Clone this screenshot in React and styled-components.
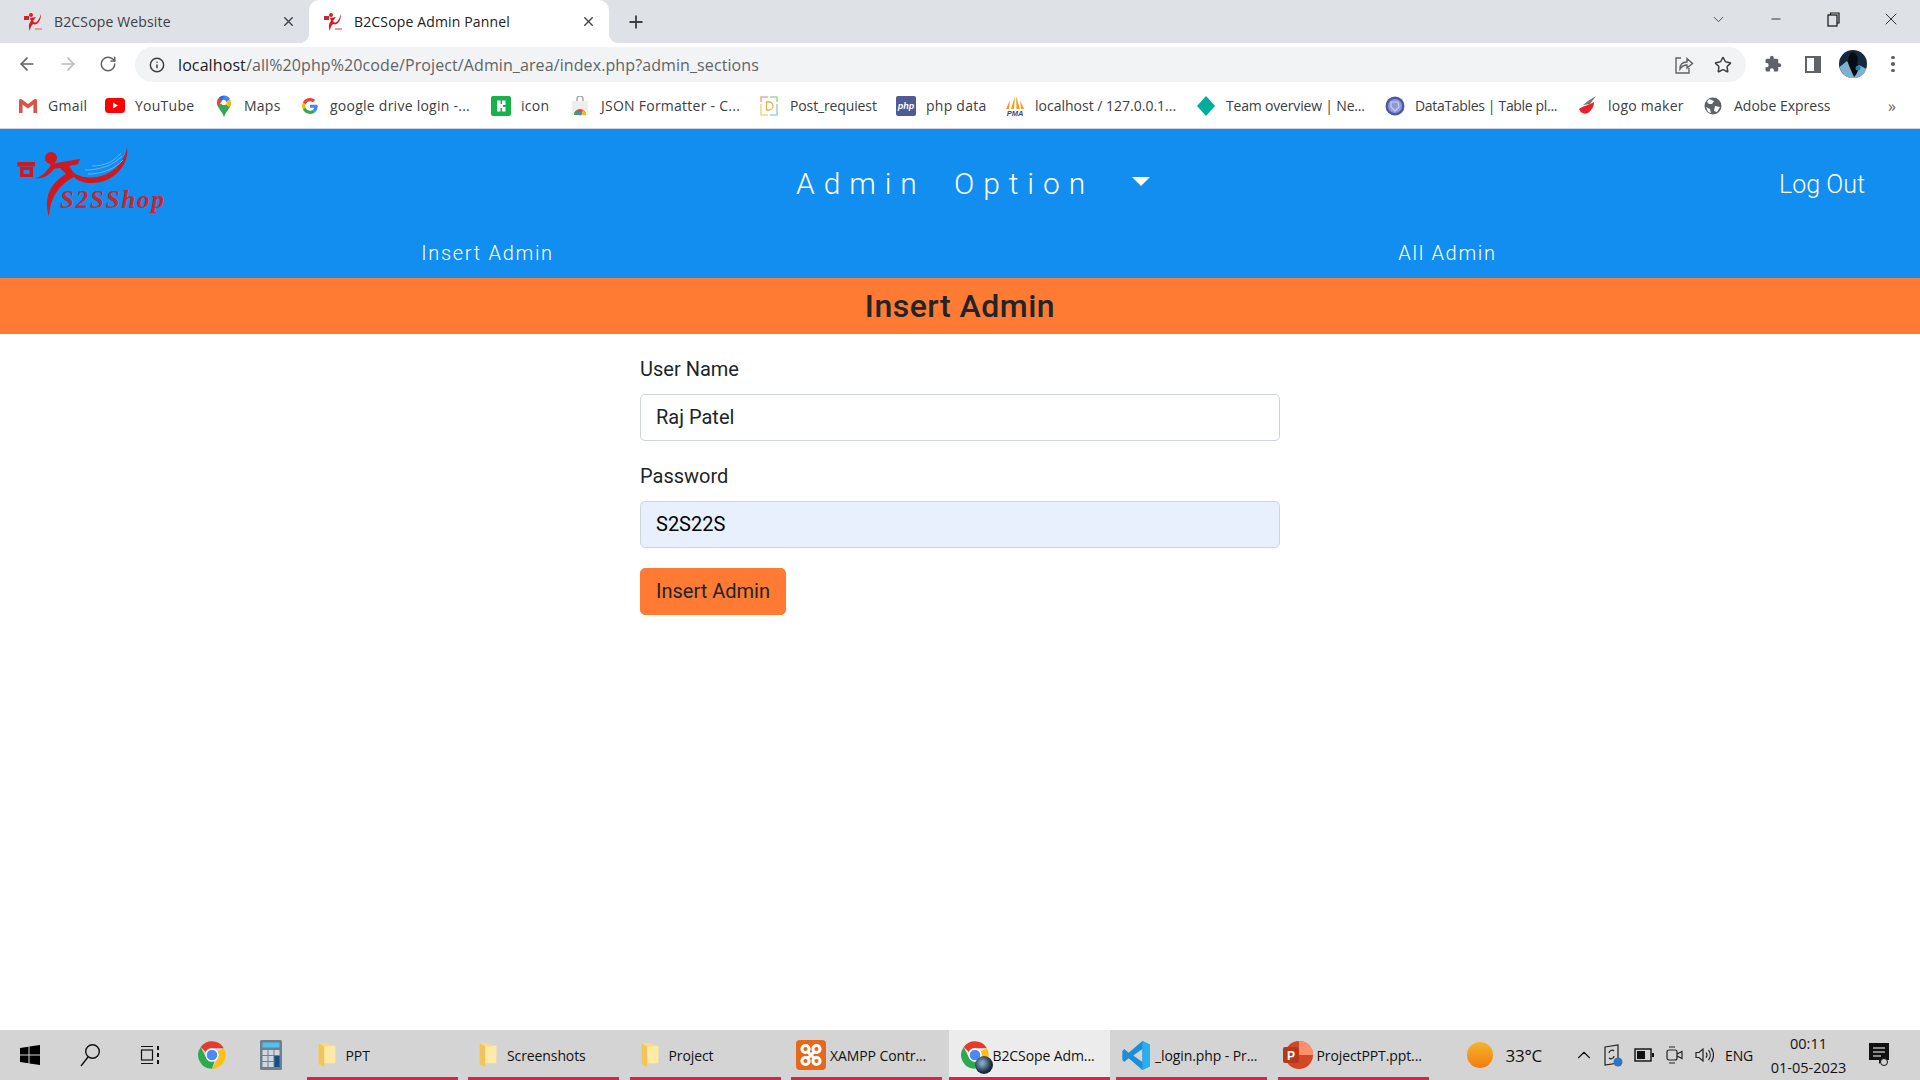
import React from 'react';
import styled, { createGlobalStyle } from 'styled-components';
import { ArrowLeft, ArrowRight, RotateCw, Star, Info, Plus, X, Minus, ChevronDown, ChevronUp } from 'lucide-react';

const GlobalStyle = createGlobalStyle`
  html, body { margin: 0; padding: 0; height: 100%; background: #fff; }
  #root { height: 100%; }
  * { box-sizing: border-box; }
`;

function Favicon() {
  return (
    <svg width="22" height="20" viewBox="0 0 22 20">
      <rect x="1" y="4" width="5" height="4" fill="#c9252c" />
      <circle cx="8" cy="3" r="2" fill="#d11f28" />
      <path d="M7 6 L13 5 L10 9 C12 12 15 11 18 2 C18 9 14 14 10 12 C8 14 7 16 7 19 C5 15 6 11 8 9 Z" fill="#d11f28" />
      <path d="M12 17 h7" stroke="#e79a9d" strokeWidth="2" />
    </svg>
  );
}

function GmailIcon() {
  return (
    <svg width="20" height="16" viewBox="0 0 20 16">
      <path d="M1 15 V3 L10 9.5 L19 3 V15 H15 V7.5 L10 11 L5 7.5 V15 Z" fill="#f1f1f1" />
      <path d="M1 15 V2.5 C1 1 2.6 0.4 4 1.4 L10 6 L16 1.4 C17.4 0.4 19 1 19 2.5 V15 H15.5 V6.5 L10 10.5 L4.5 6.5 V15 Z" fill="#d9534a" />
    </svg>
  );
}

function YoutubeIcon() {
  return (
    <svg width="20" height="15" viewBox="0 0 20 15">
      <rect width="20" height="15" rx="3.5" fill="#f00" />
      <path d="M8 4.5 L13 7.5 L8 10.5 Z" fill="#fff" />
    </svg>
  );
}

function MapsIcon() {
  return (
    <svg width="16" height="22" viewBox="0 0 16 22">
      <path d="M8 22 C6 16 1 13 1 7.5 L8 10 Z" fill="#34a853" />
      <path d="M8 22 C10 16 15 13 15 7.5 L8 10 Z" fill="#34a853" />
      <path d="M3 2.5 A7 7 0 0 1 8 .5 L8 4 L3 8 Z" fill="#1a73e8" />
      <path d="M8 .5 A7 7 0 0 1 14 4 L10 8 L7 4 Z" fill="#4285f4" />
      <path d="M1 7.5 A7 7 0 0 1 3 2.5 L6 6 L2 11 Z" fill="#ea4335" />
      <path d="M14 4 A7 7 0 0 1 15 7.5 C15 9 14 11 13 12 L9 9 Z" fill="#fbbc04" />
      <circle cx="8" cy="7.5" r="2.5" fill="#fff" />
    </svg>
  );
}

function GoogleIcon() {
  return (
    <svg width="16" height="16" viewBox="0 0 48 48">
      <path fill="#EA4335" d="M24 9.5c3.5 0 6.7 1.3 9.1 3.5l6.8-6.8C35.8 2.4 30.3 0 24 0 14.6 0 6.5 5.4 2.6 13.2l7.9 6.2C12.4 13.7 17.7 9.5 24 9.5z" />
      <path fill="#4285F4" d="M46.9 24.5c0-1.6-.1-3.1-.4-4.5H24v9h12.9c-.6 3-2.2 5.5-4.8 7.2l7.7 6c4.5-4.2 7.1-10.3 7.1-17.7z" />
      <path fill="#FBBC05" d="M10.5 28.6c-.5-1.4-.8-3-.8-4.6s.3-3.2.8-4.6l-7.9-6.2C.9 16.5 0 20.1 0 24s.9 7.5 2.6 10.8l7.9-6.2z" />
      <path fill="#34A853" d="M24 48c6.5 0 11.9-2.1 15.9-5.8l-7.7-6c-2.2 1.4-4.9 2.3-8.2 2.3-6.3 0-11.6-4.2-13.5-9.9l-7.9 6.2C6.5 42.6 14.6 48 24 48z" />
    </svg>
  );
}

function GreenIcon() {
  return (
    <svg width="20" height="20" viewBox="0 0 20 20">
      <rect width="20" height="20" rx="2" fill="#17b34a" />
      <path d="M6 4.5 H9.5 V8 H11 V4.5 H14.5 V9 H12 V11 H14.5 V15.5 H11 V12 H9.5 V15.5 H6 Z" fill="#fff" />
    </svg>
  );
}

function StoreIcon() {
  return (
    <svg width="18" height="20" viewBox="0 0 18 20">
      <path d="M6 6 V3 A3 3 0 0 1 12 3 V6" fill="none" stroke="#a9a9a9" strokeWidth="1.5" />
      <rect x="1" y="5" width="16" height="14" fill="#eeeeee" />
      <path d="M3 19 A6 6 0 0 1 15 19 Z" fill="#ea4335" />
      <path d="M3 19 A6 6 0 0 1 6 14 L9 19 Z" fill="#34a853" />
      <path d="M15 19 A6 6 0 0 0 12 14 L9 19 Z" fill="#fbbc04" />
      <circle cx="9" cy="17.5" r="2" fill="#4285f4" />
    </svg>
  );
}

function PostIcon() {
  return (
    <svg width="18" height="20" viewBox="0 0 18 20" fill="none" strokeWidth="1.6">
      <path d="M1 6 V1 H8" stroke="#f4a79d" />
      <path d="M10 1 H17 V6" stroke="#a8d8a0" />
      <path d="M17 8 V19 H10" stroke="#9fd0e8" />
      <path d="M8 19 H1 V8" stroke="#f4d58a" />
      <path d="M6.5 6 H9 A4 4 0 0 1 9 14 H6.5 Z" stroke="#e8b04b" strokeWidth="1.3" />
    </svg>
  );
}

function PhpIcon() {
  return (
    <Badge>php</Badge>
  );
}

function PmaIcon() {
  return (
    <svg width="20" height="22" viewBox="0 0 20 22">
      <path d="M10 1 L6 14 H9 Z M11 1 L15 14 H11.5 Z M5 5 L1 14 H4 Z M15 5 L19 14 H16 Z" fill="#f39c1f" />
      <text x="10" y="21" textAnchor="middle" fontFamily="'Liberation Sans', sans-serif" fontWeight="700" fontStyle="italic" fontSize="7.5" fill="#3d4a8a">PMA</text>
    </svg>
  );
}

function DiamondIcon() {
  return (
    <svg width="20" height="20" viewBox="0 0 20 20">
      <path d="M10 0 L19 10 L10 20 L1 10 Z" fill="#00ad9c" />
    </svg>
  );
}

function DataTablesIcon() {
  return (
    <svg width="20" height="20" viewBox="0 0 20 20">
      <circle cx="10" cy="10" r="9.5" fill="#4a59a8" />
      <circle cx="10" cy="10" r="7" fill="#8f9bd6" />
      <path d="M6 6 H13 L14 11 L10 15 L6 11 Z" fill="none" stroke="#c9d0ee" strokeWidth="1.2" />
    </svg>
  );
}

function WingIcon() {
  return (
    <svg width="20" height="20" viewBox="0 0 20 20">
      <path d="M18 0 L10 5 L5 9 L12 8 Z" fill="#777" />
      <path d="M14 7 C11 9 5 10 1 13 C3 19 10 19 13 14 C15 12 16 9 16 6 Z" fill="#e8202a" />
    </svg>
  );
}

function GlobeIcon() {
  return (
    <svg width="18" height="18" viewBox="0 0 18 18">
      <circle cx="9" cy="9" r="8.5" fill="#5f6368" />
      <path d="M5 2 L10 4 L8 7 L5 7 L3 5 Z M11 9 L16 10 L13 15 L10 14 Z M2 10 L6 12 L7 16 L4 15 Z" fill="#fff" />
    </svg>
  );
}

function ShareIcon() {
  return (
    <svg width="20" height="20" viewBox="0 0 20 20" fill="none" stroke="#5f6368" strokeWidth="1.4">
      <path d="M7 3 H2 V18 H15 V13" />
      <path d="M6 14 C6 9 9 7 13 7 V3.5 L18.5 8.5 L13 13 V10 C10 10 8 11 6 14 Z" />
    </svg>
  );
}

function PuzzleIcon() {
  return (
    <svg width="18" height="18" viewBox="0 0 24 24" fill="#5f6368">
      <path d="M20.5 11H19V7a2 2 0 0 0-2-2h-4V3.5a2.5 2.5 0 0 0-5 0V5H4a2 2 0 0 0-2 2v3.8h1.5a2.7 2.7 0 0 1 0 5.4H2V20a2 2 0 0 0 2 2h3.8v-1.5a2.7 2.7 0 0 1 5.4 0V22H17a2 2 0 0 0 2-2v-4h1.5a2.5 2.5 0 0 0 0-5z" />
    </svg>
  );
}

function AvatarIcon() {
  return (
    <svg width="28" height="28" viewBox="0 0 28 28">
      <circle cx="14" cy="14" r="14" fill="#142a3d" />
      <path d="M0.5 17 L8 11 L13 20 L20 15 L27.5 19 A14 14 0 0 1 0.5 17 Z" fill="#7fb0cf" />
      <path d="M13 2 C18 3 20 8 18 13 C21 17 19 23 15 27 L11 18 C8 12 9 5 13 2 Z" fill="#060b10" />
      <circle cx="19" cy="18" r="2.5" fill="#1d7fa8" />
    </svg>
  );
}

function WindowsIcon() {
  return (
    <svg width="20" height="20" viewBox="0 0 20 20" fill="#000">
      <path d="M0 3 L8.5 1.8 V9.5 H0 Z M9.5 1.6 L20 0 V9.5 H9.5 Z M0 10.5 H8.5 V18.2 L0 17 Z M9.5 10.5 H20 V20 L9.5 18.4 Z" />
    </svg>
  );
}

function SearchIcon() {
  return (
    <svg width="22" height="24" viewBox="0 0 22 24" fill="none" stroke="#111" strokeWidth="1.4">
      <circle cx="13.5" cy="8.5" r="6.8" />
      <path d="M9 14 L2 23" />
    </svg>
  );
}

function TaskViewIcon() {
  return (
    <svg width="20" height="20" viewBox="0 0 20 20" fill="none" stroke="#111" strokeWidth="1.2">
      <path d="M1 1.5 H13 M1 18.5 H13" />
      <rect x="1.5" y="5" width="11" height="10" />
      <path d="M18 1 V5 M18 8 V12 M18 15 V19" strokeWidth="2" />
    </svg>
  );
}

function ChromeIcon({ size = 30 }) {
  return (
    <svg width={size} height={size} viewBox="0 0 48 48">
      <path d="M24 2 A22 22 0 0 1 43 13 H24 A11 11 0 0 0 14 19 L6 11 A22 22 0 0 1 24 2 Z" fill="#e33b2e" />
      <path d="M43 13 A22 22 0 0 1 24 46 L33 30 A11 11 0 0 0 33 18 Z" fill="#fbc116" />
      <path d="M6 11 L15 29 A11 11 0 0 0 28 34 L24 46 A22 22 0 0 1 6 11 Z" fill="#2da94f" />
      <circle cx="24" cy="24" r="10.5" fill="#fff" />
      <circle cx="24" cy="24" r="8.5" fill="#4a8af4" />
    </svg>
  );
}

function CalcIcon() {
  return (
    <svg width="22" height="30" viewBox="0 0 22 30">
      <rect width="22" height="30" rx="1.5" fill="#6e7f8d" />
      <rect x="2.5" y="2.5" width="17" height="5" fill="#4fc3f0" />
      <g fill="#cfd8de">
        <rect x="2.5" y="10" width="5" height="5" /><rect x="8.5" y="10" width="5" height="5" /><rect x="14.5" y="10" width="5" height="5" />
        <rect x="2.5" y="16" width="5" height="5" /><rect x="8.5" y="16" width="5" height="5" />
        <rect x="2.5" y="22" width="5" height="5" /><rect x="8.5" y="22" width="5" height="5" />
      </g>
      <rect x="14.5" y="16" width="5" height="11" fill="#124f8c" />
    </svg>
  );
}

function FolderIcon() {
  return (
    <svg width="18" height="26" viewBox="0 0 18 28">
      <path d="M0 1 H6 L18 4 V23 H6 V27 L0 24 Z" fill="#f8dc85" />
      <path d="M6 5 L18 4 V23 H6 Z" fill="#fde9a8" />
      <path d="M0 1 L6 5 V27 L0 24 Z" fill="#f0c65a" />
    </svg>
  );
}

function XamppIcon() {
  return (
    <svg width="30" height="30" viewBox="0 0 30 30">
      <rect width="30" height="30" rx="4" fill="#e5681c" />
      <g fill="none" stroke="#fff" strokeWidth="3">
        <circle cx="9.5" cy="9" r="3.6" />
        <circle cx="20.5" cy="9" r="3.6" />
        <circle cx="9.5" cy="21" r="3.6" />
        <circle cx="20.5" cy="21" r="3.6" />
        <path d="M12 12 L18 18 M18 12 L12 18" />
      </g>
    </svg>
  );
}

function VscodeIcon() {
  return (
    <svg width="30" height="31" viewBox="0 0 30 34">
      <path d="M22 1 L30 5 V29 L22 33 L7 20 L2 24 L0 22 V12 L2 10 L7 14 Z M22 10 L12 17 L22 24 Z" fill="#1c8fd9" />
      <path d="M22 1 L30 5 V29 L22 33 Z" fill="#2cadf0" />
    </svg>
  );
}

function PowerPointIcon() {
  return (
    <svg width="30" height="30" viewBox="0 0 30 30">
      <circle cx="16" cy="15" r="14" fill="#d24726" />
      <path d="M16 1 A14 14 0 0 1 30 15 H16 Z" fill="#ff8f6b" />
      <rect x="0" y="7" width="16" height="16" rx="2" fill="#b7371a" />
      <text x="8" y="20" textAnchor="middle" fontFamily="'Liberation Sans', sans-serif" fontWeight="700" fontSize="12" fill="#fff">P</text>
    </svg>
  );
}

function LogoMark() {
  return (
    <LogoSvg width="150" height="70" viewBox="17 18 150 70">
      <rect x="17.5" y="33" width="17.5" height="4.5" fill="#d0191f" />
      <path d="M20 38 H33 V48 H20 Z M23.5 41 V45 H29.5 V41 Z" fillRule="evenodd" fill="#d0191f" />
      <circle cx="51" cy="29" r="6" fill="#d0191f" />
      <path d="M44 31 L50 30 L50 33 Z" fill="#d0191f" />
      <path d="M35 49 C42 48 47 42 51 36 L56 37 C52 44 44 51 35 49 Z" fill="#d0191f" />
      <path d="M50 35 L80 30 L78 35 L69 37 L73 43 C83 52 108 50 118 36 C123 30 126 26 127 18 C130 36 113 54 92 54 C84 54 78 52 74 48 C62 54 50 66 49 88 C44 70 48 56 66 45 L60 39 L52 40 Z" fill="#d0191f" />
      <g fill="none" stroke="#63b4f0" strokeWidth="1">
        <path d="M85 41 C100 41 114 36 122 27" />
        <path d="M88 45 C102 45 115 40 123 31" />
        <path d="M92 37 C104 37 114 33 121 24" />
      </g>
      <LogoText x="60" y="79">S2SShop</LogoText>
    </LogoSvg>
  );
}

const bookmarks = [
  { label: 'Gmail', w: 37, icon: <GmailIcon /> },
  { label: 'YouTube', w: 61, icon: <YoutubeIcon /> },
  { label: 'Maps', w: 38, slot: 18, icon: <MapsIcon /> },
  { label: 'google drive login -...', w: 141, slot: 18, icon: <GoogleIcon /> },
  { label: 'icon', w: 30, icon: <GreenIcon /> },
  { label: 'JSON Formatter - C...', w: 139, icon: <StoreIcon /> },
  { label: 'Post_requiest', w: 86, ls: -0.13, icon: <PostIcon /> },
  { label: 'php data', w: 59, icon: <PhpIcon /> },
  { label: 'localhost / 127.0.0.1...', w: 141, ls: 0, icon: <PmaIcon /> },
  { label: 'Team overview | Ne...', w: 139, ls: -0.18, icon: <DiamondIcon /> },
  { label: 'DataTables | Table pl...', w: 143, ls: -0.33, icon: <DataTablesIcon /> },
  { label: 'logo maker', w: 76, icon: <WingIcon /> },
  { label: 'Adobe Express', w: 96, ls: 0, icon: <GlobeIcon /> },
];

const apps = [
  { label: 'PPT', icon: <FolderIcon /> },
  { label: 'Screenshots', icon: <FolderIcon /> },
  { label: 'Project', icon: <FolderIcon /> },
  { label: 'XAMPP Contr...', icon: <XamppIcon /> },
  { label: 'B2CSope Adm...', icon: <ChromeIcon />, active: true },
  { label: '_login.php - Pr...', icon: <VscodeIcon /> },
  { label: 'ProjectPPT.ppt...', icon: <PowerPointIcon /> },
];

function App() {
  return (
    <Screen>
      <GlobalStyle />
      <Browser>
        <TabStrip>
          <Tab>
            <Favicon />
            <TabTitle>B2CSope Website</TabTitle>
            <X size={15} strokeWidth={2.2} />
          </Tab>
          <Tab $active>
            <Favicon />
            <TabTitle>B2CSope Admin Pannel</TabTitle>
            <X size={15} strokeWidth={2.2} />
          </Tab>
          <NewTab><Plus size={20} strokeWidth={2.2} /></NewTab>
          <WindowControls>
            <WinButton><ChevronDown size={17} strokeWidth={1} /></WinButton>
            <WinButton><Minus size={14} strokeWidth={1.4} /></WinButton>
            <WinButton>
              <svg width="13" height="15" viewBox="0 0 13 15" fill="none" stroke="#111" strokeWidth="1.2">
                <rect x="1" y="3" width="9" height="11" />
                <path d="M3.5 3 V1 H12 V11 H10" />
              </svg>
            </WinButton>
            <WinButton><X size={20} strokeWidth={1} /></WinButton>
          </WindowControls>
        </TabStrip>
        <Toolbar>
          <NavButtons>
            <ArrowLeft size={20} color="#5f6368" strokeWidth={2} />
            <ArrowRight size={20} color="#b9bcbf" strokeWidth={2} />
            <RotateCw size={18} color="#5f6368" strokeWidth={2} />
          </NavButtons>
          <AddressBar>
            <Info size={16} color="#3c4043" strokeWidth={2.2} />
            <Url><b>localhost</b>/all%20php%20code/Project/Admin_area/index.php?admin_sections</Url>
            <AddressActions>
              <ShareIcon />
              <Star size={18} color="#3c4043" strokeWidth={2} />
            </AddressActions>
          </AddressBar>
          <ToolIcons>
            <ToolSlot><PuzzleIcon /></ToolSlot>
            <ToolSlot><SidePanelIcon /></ToolSlot>
            <ToolSlot><AvatarIcon /></ToolSlot>
            <ToolSlot><MenuDots><i /><i /><i /></MenuDots></ToolSlot>
          </ToolIcons>
        </Toolbar>
        <BookmarkBar>
          {bookmarks.map((b) => (
            <Bookmark key={b.label}>
              <BookmarkIcon $slot={b.slot}>{b.icon}</BookmarkIcon>
              <BookmarkLabel $w={b.w} $ls={b.ls}>{b.label}</BookmarkLabel>
            </Bookmark>
          ))}
          <MoreBookmarks>»</MoreBookmarks>
        </BookmarkBar>
      </Browser>

      <Page>
        <Header>
          <HeaderTop>
            <LogoCell><LogoMark /></LogoCell>
            <AdminOption>
              Admin Option
              <Caret />
            </AdminOption>
            <LogOut>Log Out</LogOut>
          </HeaderTop>
          <SubNav>
            <SubLink>Insert Admin</SubLink>
            <SubLink>All Admin</SubLink>
          </SubNav>
        </Header>
        <TitleBar>Insert Admin</TitleBar>
        <Form>
          <Label>User Name</Label>
          <Input value="Raj Patel" readOnly />
          <Label>Password</Label>
          <Input $autofill value="S2S22S" readOnly />
          <SubmitButton type="button">Insert Admin</SubmitButton>
        </Form>
      </Page>

      <Taskbar>
        <TaskSlot><WindowsIcon /></TaskSlot>
        <TaskSlot><SearchIcon /></TaskSlot>
        <TaskSlot><TaskViewIcon /></TaskSlot>
        <TaskSlot $nudge={4}><ChromeIcon /></TaskSlot>
        <TaskSlot $nudge={2}><CalcIcon /></TaskSlot>
        <Apps>
          {apps.map((a) => (
            <AppButton key={a.label} $active={a.active}>
              <AppIcon>
                {a.icon}
                {a.active && <AppBadge />}
              </AppIcon>
              <AppLabel>{a.label}</AppLabel>
            </AppButton>
          ))}
        </Apps>
        <Tray>
          <Weather>
            <Sun />
            <TrayText>33°C</TrayText>
          </Weather>
          <TrayIcon><ChevronUp size={22} strokeWidth={1.2} color="#111" /></TrayIcon>
          <TrayIcon>
            <svg width="22" height="24" viewBox="0 0 22 24" fill="none" stroke="#222" strokeWidth="1.2">
              <path d="M2 4 L15 2 V20 L2 22 Z" />
              <path d="M6 10 A3 3 0 0 1 11 8 M11 13 A3 3 0 0 1 6 15" />
              <circle cx="15" cy="19" r="4.5" fill="#2f74c0" stroke="none" />
            </svg>
          </TrayIcon>
          <TrayIcon>
            <svg width="20" height="14" viewBox="0 0 20 14">
              <rect x="1" y="1" width="16" height="12" fill="none" stroke="#111" strokeWidth="1.4" />
              <rect x="3" y="3" width="8" height="8" fill="#111" />
              <rect x="18" y="5" width="2" height="4" fill="#111" />
            </svg>
          </TrayIcon>
          <TrayIcon>
            <svg width="20" height="20" viewBox="0 0 20 20" fill="none" stroke="#222" strokeWidth="1.2">
              <rect x="3" y="5" width="10" height="10" rx="2" />
              <path d="M13 9 L18 6.5 V13.5 L13 11 M5 2 H11 M5 18 H11" />
            </svg>
          </TrayIcon>
          <TrayIcon>
            <svg width="20" height="20" viewBox="0 0 20 20" fill="none" stroke="#222" strokeWidth="1.2">
              <path d="M2 7.5 H5 L9 4 V16 L5 12.5 H2 Z" />
              <path d="M12 7.5 A4 4 0 0 1 12 12.5 M14.5 5 A8 8 0 0 1 14.5 15 M17 3 A11 11 0 0 1 17 17" />
            </svg>
          </TrayIcon>
          <TrayText $lang>ENG</TrayText>
          <Clock>
            <span>00:11</span>
            <span>01-05-2023</span>
          </Clock>
          <TrayIcon>
            <svg width="20" height="24" viewBox="0 0 20 24">
              <path d="M0 0 H20 V17 H14 L10 21 V17 H0 Z" fill="#111" />
              <path d="M4 5 H16 M4 9 H16 M4 13 H12" stroke="#fff" strokeWidth="1.2" />
              <circle cx="15" cy="19" r="3.5" fill="#d5d4d4" stroke="#111" />
            </svg>
          </TrayIcon>
        </Tray>
      </Taskbar>
    </Screen>
  );
}

export default App;

const Screen = styled.div`
  height: 1080px;
  display: flex;
  flex-direction: column;
  overflow: hidden;
  background: #fff;
`;

const Browser = styled.div`
  flex: none;
  font-family: "Open Sans", "Liberation Sans", sans-serif;
`;

const TabStrip = styled.div`
  height: 43px;
  background: #dee1e6;
  display: flex;
  padding-left: 9px;
`;

const Tab = styled.div`
  position: relative;
  width: 300px;
  height: 43px;
  display: flex;
  align-items: center;
  padding: 0 13px 0 14px;
  gap: 9px;
  color: #3c4043;
  background: ${(p) => (p.$active ? '#fff' : 'transparent')};
  border-radius: 10px 10px 0 0;
  svg:last-child { color: #3c4043; }
  ${(p) => p.$active && `
    color: #202124;
    &::before, &::after {
      content: "";
      position: absolute;
      bottom: 0;
      width: 10px;
      height: 10px;
    }
    &::before { left: -10px; background: radial-gradient(circle at 0 0, transparent 10px, #fff 10.5px); }
    &::after { right: -10px; background: radial-gradient(circle at 100% 0, transparent 10px, #fff 10.5px); }
  `}
`;

const TabTitle = styled.span`
  flex: 1;
  margin-top: -1px;
  font-size: 14px;
  letter-spacing: 0.15px;
  white-space: nowrap;
`;

const NewTab = styled.div`
  margin-left: 17px;
  display: flex;
  align-items: center;
  color: #3c4043;
`;

const WindowControls = styled.div`
  margin-left: auto;
  display: flex;
`;

const WinButton = styled.div`
  width: 57.5px;
  height: 38px;
  display: flex;
  align-items: center;
  justify-content: center;
  color: #111;
`;

const Toolbar = styled.div`
  height: 42px;
  display: flex;
  align-items: center;
  background: #fff;
`;

const NavButtons = styled.div`
  width: 135px;
  display: flex;
  align-items: center;
  justify-content: space-between;
  padding: 0 18px 0 17px;
`;

const AddressBar = styled.div`
  width: 1611px;
  height: 35px;
  margin-top: 1px;
  display: flex;
  align-items: center;
  padding: 0 14px;
  background: #f1f3f4;
  border-radius: 18px;
`;

const Url = styled.div`
  margin-left: 13px;
  font-size: 16px;
  letter-spacing: 0.1px;
  color: #5f6368;
  white-space: nowrap;
  b { font-weight: 400; color: #202124; }
`;

const AddressActions = styled.div`
  margin-left: auto;
  display: flex;
  align-items: center;
  gap: 20px;
`;

const ToolIcons = styled.div`
  flex: 1;
  display: grid;
  grid-template-columns: repeat(4, 40px);
  padding-left: 7px;
`;

const ToolSlot = styled.div`
  display: flex;
  align-items: center;
  justify-content: center;
`;

const SidePanelIcon = styled.div`
  width: 16px;
  height: 17px;
  border: 2px solid #5f6368;
  border-right-width: 7px;
`;

const MenuDots = styled.div`
  display: flex;
  flex-direction: column;
  gap: 3px;
  i {
    width: 3.5px;
    height: 3.5px;
    border-radius: 50%;
    background: #5f6368;
  }
`;

const BookmarkBar = styled.div`
  height: 44px;
  display: flex;
  align-items: center;
  gap: 20px;
  padding: 0 0 2px 18px;
  background: #fff;
  border-bottom: 1px solid #d3d6da;
`;

const Bookmark = styled.div`
  display: flex;
  align-items: center;
  gap: 10px;
`;

const BookmarkIcon = styled.div`
  width: ${(p) => p.$slot || 20}px;
  height: 22px;
  display: flex;
  align-items: center;
`;

const Badge = styled.div`
  width: 20px;
  height: 20px;
  border-radius: 2px;
  background: #4f5b93;
  color: #fff;
  font: italic 700 9px "Liberation Sans", sans-serif;
  line-height: 20px;
  text-align: center;
`;

const BookmarkLabel = styled.span`
  width: ${(p) => p.$w}px;
  font-size: 14px;
  letter-spacing: ${(p) => (p.$ls === undefined ? 0.25 : p.$ls)}px;
  color: #3c4043;
  white-space: nowrap;
`;

const MoreBookmarks = styled.span`
  margin-left: auto;
  margin-right: 24px;
  font-size: 16px;
  color: #5f6368;
`;

const Page = styled.div`
  flex: 1;
  font-family: Roboto, "Liberation Sans", sans-serif;
  color: #212529;
`;

const Header = styled.header`
  background: #128df0;
  color: #fff;
`;

const HeaderTop = styled.div`
  height: 110px;
  display: grid;
  grid-template-columns: 796px 1fr auto;
  align-items: center;
  padding-right: 55px;
`;

const LogoCell = styled.div`
  padding-left: 17px;
  display: flex;
  margin-top: -4px;
`;

const LogoSvg = styled.svg`
  display: block;
`;

const LogoText = styled.text`
  font-family: "Liberation Serif", serif;
  font-style: italic;
  font-weight: 700;
  font-size: 25px;
  letter-spacing: 1.8px;
  fill: #d0232b;
`;

const AdminOption = styled.div`
  display: flex;
  align-items: center;
  margin-top: -2px;
  font-size: 30px;
  font-weight: 300;
  letter-spacing: 8.9px;
  word-spacing: 12px;
  white-space: nowrap;
`;

const Caret = styled.span`
  margin-left: 38px;
  margin-top: -3px;
  width: 0;
  height: 0;
  border-left: 9px solid transparent;
  border-right: 9px solid transparent;
  border-top: 9px solid #fff;
`;

const LogOut = styled.div`
  font-size: 25px;
  font-weight: 300;
`;

const SubNav = styled.nav`
  height: 39px;
  display: grid;
  grid-template-columns: 1fr 1fr;
  padding-bottom: 10px;
`;

const SubLink = styled.div`
  padding-left: 15px;
  text-align: center;
  font-size: 20px;
  font-weight: 300;
  letter-spacing: 1.7px;
  line-height: 29px;
`;

const TitleBar = styled.h1`
  margin: 0;
  height: 56px;
  background: #ff7a33;
  color: #212529;
  font-size: 32px;
  font-weight: 500;
  letter-spacing: 0.5px;
  line-height: 56px;
  text-align: center;
`;

const Form = styled.form`
  width: 640px;
  margin: 0 auto;
  padding-top: 20px;
  display: flex;
  flex-direction: column;
  align-items: flex-start;
`;

const Label = styled.label`
  font-size: 20px;
  line-height: 30px;
  margin-bottom: 10px;
`;

const Input = styled.input`
  display: block;
  width: 100%;
  height: 47px;
  margin-bottom: 20px;
  padding: 0 14px 2px 15px;
  border: 1px solid #ced4da;
  border-radius: 5px;
  outline: none;
  font-family: Roboto, "Liberation Sans", sans-serif;
  font-size: 20px;
  color: ${(p) => (p.$autofill ? '#000' : '#212529')};
  background: ${(p) => (p.$autofill ? '#e8f0fe' : '#fff')};
`;

const SubmitButton = styled.button`
  height: 47px;
  width: 146px;
  padding: 0 0 2px;
  border: 1px solid #ff7a33;
  border-radius: 5px;
  background: #ff7a33;
  color: #212529;
  font-family: Roboto, "Liberation Sans", sans-serif;
  font-size: 20px;
`;

const Taskbar = styled.footer`
  flex: none;
  height: 50px;
  display: flex;
  background: #d5d4d4;
  font-family: "Open Sans", "Liberation Sans", sans-serif;
  color: #111;
`;

const TaskSlot = styled.div`
  width: 60px;
  flex: none;
  display: flex;
  align-items: center;
  justify-content: center;
  padding-left: ${(p) => p.$nudge || 0}px;
`;

const Apps = styled.div`
  display: flex;
  gap: 10.5px;
  margin-left: 6.5px;
`;

const AppButton = styled.div`
  width: ${(p) => (p.$active ? 161 : 151)}px;
  margin: ${(p) => (p.$active ? '0 -4px' : '0')};
  display: flex;
  align-items: center;
  gap: ${(p) => (p.$active ? 3 : 4)}px;
  padding: 3px 0 0 ${(p) => (p.$active ? 11 : 5)}px;
  background: ${(p) => (p.$active ? '#ececec' : 'transparent')};
  border-bottom: 3px solid #d02848;
`;

const AppIcon = styled.div`
  position: relative;
  width: 30px;
  display: flex;
  align-items: center;
  justify-content: center;
`;

const AppBadge = styled.span`
  position: absolute;
  right: -3px;
  bottom: -4px;
  width: 18px;
  height: 18px;
  border-radius: 50%;
  background: radial-gradient(circle at 40% 40%, #7fa4c0 10%, #1a2b3b 60%);
`;

const AppLabel = styled.span`
  font-size: 14px;
  letter-spacing: -0.1px;
  white-space: nowrap;
`;

const Tray = styled.div`
  margin-left: auto;
  display: flex;
  align-items: center;
  padding-right: 26px;
`;

const Weather = styled.div`
  display: flex;
  align-items: center;
  gap: 12px;
  margin-right: 27px;
`;

const Sun = styled.span`
  width: 26px;
  height: 26px;
  border-radius: 50%;
  background: linear-gradient(#f3b52e, #f47c0e);
`;

const TrayText = styled.span`
  font-size: ${(p) => (p.$lang ? 14 : 17)}px;
  margin-left: ${(p) => (p.$lang ? 6 : 0)}px;
  letter-spacing: -0.2px;
`;

const TrayIcon = styled.div`
  width: 30px;
  display: flex;
  justify-content: center;
  align-items: center;
`;

const Clock = styled.div`
  width: 111px;
  display: flex;
  flex-direction: column;
  align-items: center;
  gap: 3px;
  font-size: 14.5px;
  line-height: 21px;
  letter-spacing: 0;
`;
